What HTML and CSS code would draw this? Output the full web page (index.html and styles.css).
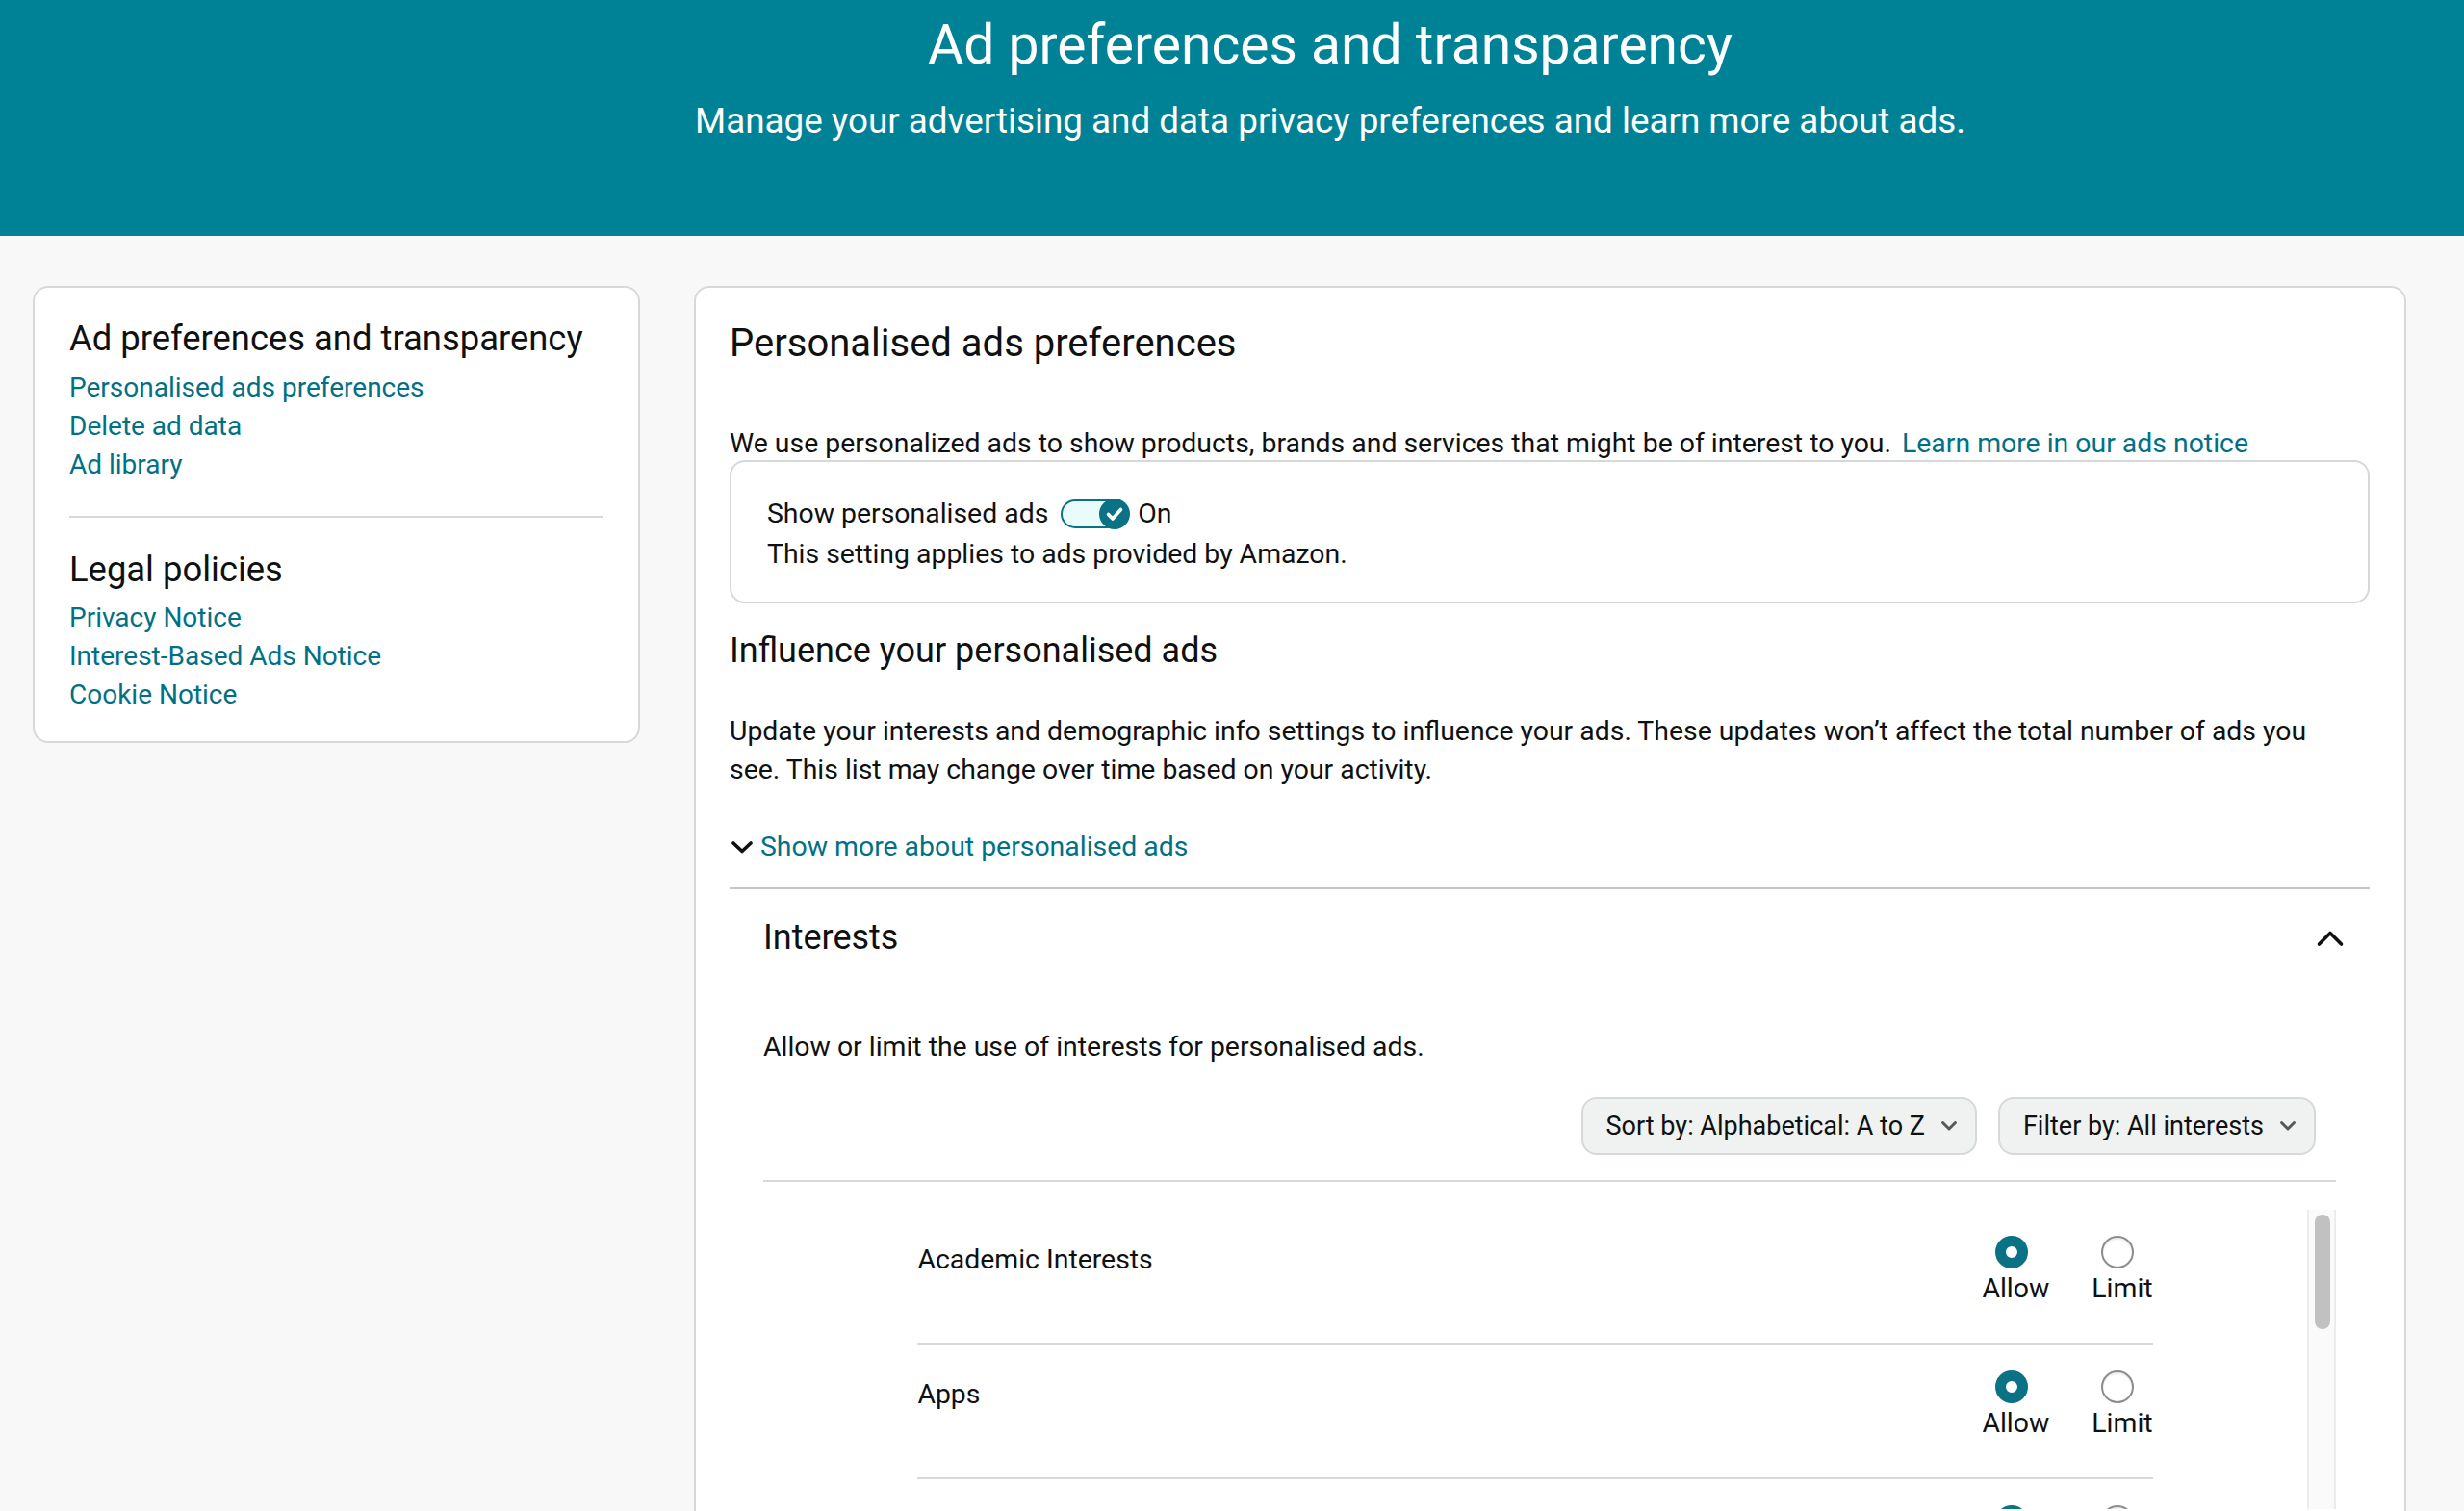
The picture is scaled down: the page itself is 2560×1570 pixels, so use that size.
FILE: index.html
```html
<!DOCTYPE html>
<html lang="en">
<head>
<meta charset="utf-8">
<title>Ad preferences and transparency</title>
<link rel="stylesheet" href="styles.css">
</head>
<body>
<header class="hero">
  <h1 class="hero-title">Ad preferences and transparency</h1>
  <p class="hero-sub">Manage your advertising and data privacy preferences and learn more about ads.</p>
</header>

<div class="layout">
  <nav class="side-card">
    <h3 class="side-heading">Ad preferences and transparency</h3>
    <ul class="side-links">
      <li><a href="#">Personalised ads preferences</a></li>
      <li><a href="#">Delete ad data</a></li>
      <li><a href="#">Ad library</a></li>
    </ul>
    <hr class="side-divider">
    <h3 class="side-heading legal">Legal policies</h3>
    <ul class="side-links legal-links">
      <li><a href="#">Privacy Notice</a></li>
      <li><a href="#">Interest-Based Ads Notice</a></li>
      <li><a href="#">Cookie Notice</a></li>
    </ul>
  </nav>

  <main class="main-card">
    <h2 class="main-heading">Personalised ads preferences</h2>
    <p class="intro">We use personalized ads to show products, brands and services that might be of interest to you. <a href="#" class="link">Learn more in our ads notice</a></p>

    <div class="setting-box">
      <div class="toggle-row">
        <span class="toggle-label">Show personalised ads</span>
        <span class="toggle">
          <span class="knob">
            <svg width="32" height="32" viewBox="0 0 32 32"><path d="M9.5 16.5 L14 21 L22.5 11.5" fill="none" stroke="#fff" stroke-width="3.6" stroke-linecap="round" stroke-linejoin="round"/></svg>
          </span>
        </span>
        <span class="toggle-state">On</span>
      </div>
      <p class="setting-note">This setting applies to ads provided by Amazon.</p>
    </div>

    <h3 class="section-heading">Influence your personalised ads</h3>
    <p class="section-text">Update your interests and demographic info settings to influence your ads. These updates won’t affect the total number of ads you see. This list may change over time based on your activity.</p>

    <a href="#" class="show-more">
      <svg class="show-more-icon" width="22" height="13" viewBox="0 0 22 13"><polyline points="2,2 11,10.5 20,2" fill="none" stroke="#0f1111" stroke-width="3.6" stroke-linecap="round" stroke-linejoin="round"/></svg>
      <span>Show more about personalised ads</span>
    </a>

    <section class="interests">
      <div class="interests-head">
        <h3 class="interests-title">Interests</h3>
        <svg class="collapse-icon" width="30" height="20" viewBox="0 0 30 20"><polyline points="3.5,17 15,5.5 26.5,17" fill="none" stroke="#0f1111" stroke-width="3.6" stroke-linecap="round" stroke-linejoin="round"/></svg>
      </div>
      <p class="interests-text">Allow or limit the use of interests for personalised ads.</p>

      <div class="controls">
        <button class="dropdown sort">Sort by: Alphabetical: A to Z
          <svg class="dd-icon" width="18" height="12" viewBox="0 0 18 12"><polyline points="2.5,2.5 9,9 15.5,2.5" fill="none" stroke="#565959" stroke-width="3" stroke-linecap="round" stroke-linejoin="round"/></svg>
        </button>
        <button class="dropdown filter">Filter by: All interests
          <svg class="dd-icon" width="18" height="12" viewBox="0 0 18 12"><polyline points="2.5,2.5 9,9 15.5,2.5" fill="none" stroke="#565959" stroke-width="3" stroke-linecap="round" stroke-linejoin="round"/></svg>
        </button>
      </div>
      <hr class="list-divider">

      <div class="list-wrap">
        <div class="list">
          <div class="row">
            <span class="row-name">Academic Interests</span>
            <div class="options">
              <label class="option"><span class="radio checked"></span><span class="opt-label">Allow</span></label>
              <label class="option"><span class="radio"></span><span class="opt-label">Limit</span></label>
            </div>
          </div>
          <div class="row">
            <span class="row-name">Apps</span>
            <div class="options">
              <label class="option"><span class="radio checked"></span><span class="opt-label">Allow</span></label>
              <label class="option"><span class="radio"></span><span class="opt-label">Limit</span></label>
            </div>
          </div>
          <div class="row">
            <span class="row-name">Arts &amp; Entertainment</span>
            <div class="options">
              <label class="option"><span class="radio checked"></span><span class="opt-label">Allow</span></label>
              <label class="option"><span class="radio"></span><span class="opt-label">Limit</span></label>
            </div>
          </div>
        </div>
        <div class="scrollbar"><div class="thumb"></div></div>
      </div>
    </section>
  </main>
</div>
</body>
</html>
```

FILE: styles.css
```css
html, body {
  margin: 0;
  padding: 0;
  overflow: hidden;
}
body {
  background: #f8f8f8;
  color: #0f1111;
  font-family: Roboto, "Noto Sans", "Liberation Sans", sans-serif;
  font-size: 28.4px;
  line-height: 40px;
}
a { color: #007185; text-decoration: none; }
p, h1, h2, h3, ul { margin: 0; padding: 0; }
ul { list-style: none; }

/* Hero */
.hero {
  background: #008296;
  color: #fff;
  height: 245px;
  box-sizing: border-box;
  padding: 15px 0 0 204px;
  text-align: center;
}
.hero-title {
  font-size: 57px;
  line-height: 64px;
  font-weight: 400;
}
.hero-sub {
  margin-top: 23px;
  font-size: 36.8px;
  line-height: 48px;
}

/* Layout */
.layout {
  display: flex;
  align-items: flex-start;
  gap: 56px;
  padding: 52px 60px 0 34px;
}

/* Side card */
.side-card {
  width: 631px;
  flex: none;
  box-sizing: border-box;
  background: #fff;
  border: 2px solid #d5d9d9;
  border-radius: 16px;
  padding: 29px 36px 28px 36px;
}
.side-heading {
  font-size: 36.4px;
  line-height: 48px;
  font-weight: 400;
}
.side-links { margin-top: 7px; font-size: 28px; }
.side-links.legal-links { margin-top: 6px; }
.side-divider {
  border: 0;
  height: 2px;
  background: #d5d9d9;
  margin: 33px 0 0 0;
}
.side-heading.legal { margin-top: 30px; }

/* Main card */
.main-card {
  flex: 1;
  min-width: 0;
  background: #fff;
  border: 2px solid #d5d9d9;
  border-radius: 16px;
  padding: 32px 36px 0 35px;
  height: 1400px;
}
.main-heading {
  font-size: 40px;
  line-height: 52px;
  font-weight: 400;
}
.intro {
  margin-top: 61px;
  line-height: 34px;
}
.intro .link { margin-left: 4px; }

.setting-box {
  border: 2px solid #d5d9d9;
  border-radius: 16px;
  padding: 32px 24px 29px 37px;
}
.toggle-row {
  display: flex;
  align-items: center;
  height: 44px;
}
.toggle-label { margin-right: -3px; }
.toggle {
  margin-left: 16px;
  width: 70px;
  height: 30px;
  box-sizing: border-box;
  border: 2px solid #0b7285;
  border-radius: 16px;
  background: #eafbfb;
  display: flex;
  align-items: center;
  justify-content: flex-end;
}
.knob {
  width: 32px;
  height: 32px;
  border-radius: 50%;
  background: #0b7285;
  margin-right: -4px;
  display: flex;
}
.toggle-state { margin-left: 10px; }

.section-heading {
  margin-top: 25px;
  font-size: 36px;
  line-height: 48px;
  font-weight: 400;
}
.section-text {
  margin-top: 40px;
  max-width: 1680px;
}

.show-more {
  margin-top: 40px;
  display: flex;
  align-items: center;
  gap: 8px;
  margin-left: 2px;
}
.show-more-icon { flex: none; }

/* Interests */
.interests {
  margin-top: 22px;
  border-top: 2px solid #c4c6c6;
  padding: 26px 35px 0 35px;
}
.interests-head {
  display: flex;
  justify-content: space-between;
  align-items: center;
}
.interests-title {
  font-size: 36px;
  line-height: 48px;
  font-weight: 400;
}
.collapse-icon { margin-right: -9px; }
.interests-text { margin-top: 70px; }

.controls {
  margin-top: 32px;
  display: flex;
  justify-content: flex-end;
  gap: 22px;
  padding-right: 21px;
}
.dropdown {
  height: 60px;
  box-sizing: border-box;
  background: #f0f2f2;
  border: 2px solid #d5d9d9;
  border-radius: 16px;
  padding: 0 18px 0 24px;
  font-family: inherit;
  font-size: 27px;
  color: #0f1111;
  display: flex;
  align-items: center;
  gap: 16px;
}
.dd-icon { flex: none; }

.list-divider {
  border: 0;
  height: 2px;
  background: #d5d9d9;
  margin: 26px 0 0 0;
}

.list-wrap {
  margin-top: 29px;
  display: flex;
  height: 311px;
  overflow: hidden;
}
.list { flex: 1; }
.row {
  width: 80%;
  margin: 0 auto;
  display: flex;
  justify-content: space-between;
  align-items: flex-start;
  padding: 27px 0 37px 0;
  border-bottom: 2px solid #d5d9d9;
}
.row-name { margin-top: 5px; }
.options {
  display: flex;
  gap: 44px;
}
.option {
  display: flex;
  flex-direction: column;
  align-items: center;
}
.radio {
  width: 34px;
  height: 34px;
  box-sizing: border-box;
  border-radius: 50%;
  border: 2px solid #8a8d8d;
  background: #fff;
  box-shadow: inset 0 2px 2px rgba(0,0,0,0.08);
  margin-right: 9px;
}
.radio.checked {
  border: 11px solid #0b7285;
  box-shadow: none;
}
.opt-label {
  margin-top: 2px;
  line-height: 38px;
}
.scrollbar {
  width: 30px;
  flex: none;
  box-sizing: border-box;
  background: #fafafa;
  border-left: 2px solid #ececec;
  border-right: 2px solid #ececec;
  padding: 5px 0 0 6px;
}
.thumb {
  width: 16px;
  height: 119px;
  border-radius: 8px;
  background: #c1c1c1;
}
```
